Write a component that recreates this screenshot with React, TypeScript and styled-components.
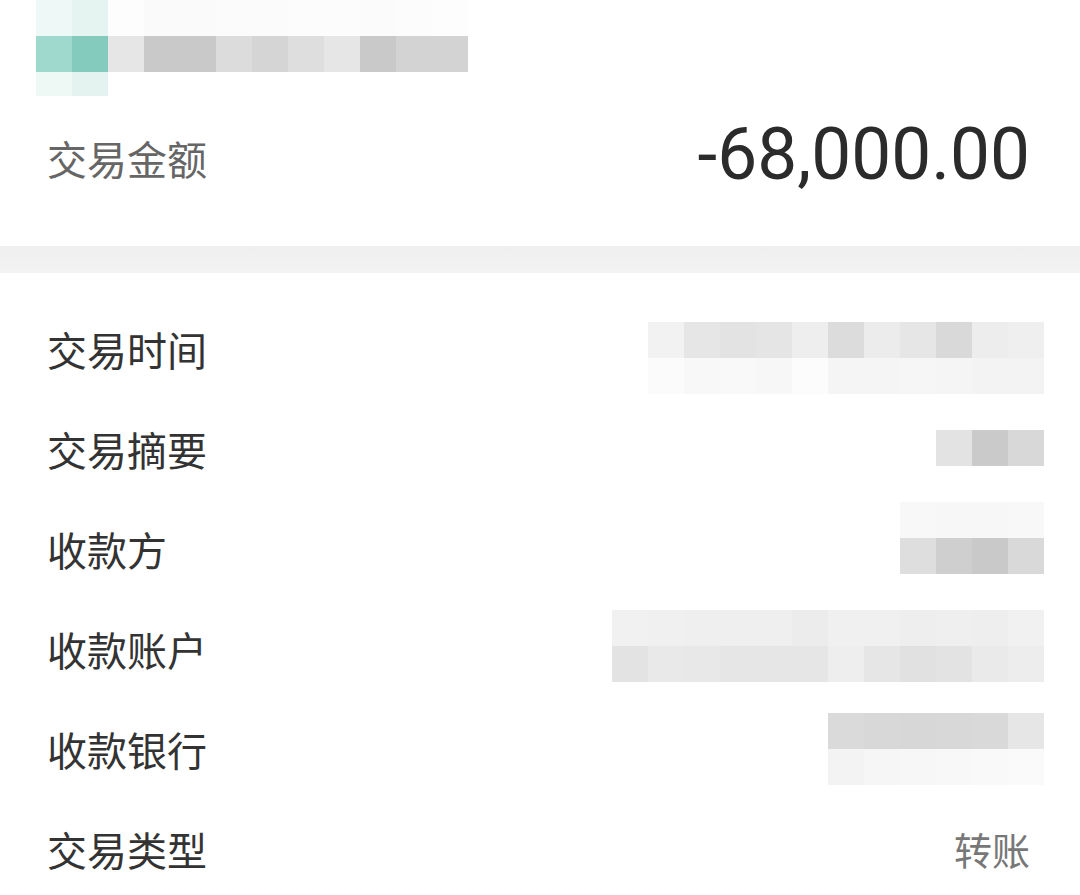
import styled, { createGlobalStyle } from "styled-components";

const GlobalStyle = createGlobalStyle`
  html, body {
    margin: 0;
    padding: 0;
    background: #ffffff;
    font-family: "Noto Sans CJK SC", "Noto Sans", sans-serif;
  }
`;

const Page = styled.div`
  width: 1080px;
  height: 895px;
  overflow: hidden;
  background: #ffffff;
`;

const Header = styled.header`
  padding: 0 0 0 36px;
  height: 96px;
  overflow: hidden;
`;

const Grid = styled.div<{ $cols: number }>`
  display: grid;
  grid-template-columns: repeat(${(p) => p.$cols}, 36px);
  grid-auto-rows: 36px;
  filter: blur(0.6px);
`;

const Cell = styled.span<{ $c: string }>`
  background: ${(p) => p.$c};
`;

const AmountRow = styled.div`
  display: flex;
  align-items: center;
  justify-content: space-between;
  height: 120px;
  padding: 0 50px 0 47px;
`;

const AmountLabel = styled.span`
  font-size: 40px;
  color: #666666;
  line-height: 1;
  margin-top: 4px;
`;

const Amount = styled.span`
  display: inline-block;
  font-family: Roboto, "Liberation Sans", sans-serif;
  font-size: 73px;
  line-height: 1;
  color: #2b2b2b;
  margin-top: -4px;
  transform: scaleX(0.975);
  transform-origin: right center;
`;

const Band = styled.div`
  height: 27px;
  margin-top: 30px;
  background: linear-gradient(#efefef, #f3f3f3);
`;

const List = styled.ul`
  list-style: none;
  margin: 0;
  padding: 26px 0 0;
`;

const Row = styled.li`
  display: flex;
  align-items: center;
  justify-content: space-between;
  height: 100px;
  padding: 0 36px 0 47px;
`;

const Label = styled.span`
  font-size: 40px;
  line-height: 1;
  color: #333333;
`;

const Value = styled.span`
  font-size: 38px;
  line-height: 1;
  color: #777777;
  margin-right: 14px;
`;

const Blur = styled.div<{ $shift: number }>`
  margin-top: ${(p) => p.$shift}px;
`;

function Mosaic({ rows }: { rows: string[][] }) {
  return (
    <Grid $cols={rows[0].length}>
      {rows.flat().map((c, i) => (
        <Cell key={i} $c={c} />
      ))}
    </Grid>
  );
}

const W = "#ffffff";

const headerMosaic = [
  ["#eef8f6", "#e6f4f1", "#fdfdfd", "#fafafa", "#fafafa", "#fbfbfb", "#fbfbfb", "#fcfcfc", "#fcfcfc", "#fbfbfb", "#fcfcfc", "#fdfdfd"],
  ["#9fd9cd", "#85cbbd", "#e6e6e6", "#c9c9c9", "#c9c9c9", "#dcdcdc", "#d5d5d5", "#dedede", "#e6e6e6", "#c9c9c9", "#d3d3d3", "#d3d3d3"],
  ["#eef8f5", "#e4f3ef", W, W, W, W, W, W, W, W, W, W],
];

const rows: { label: string; value?: string; shift?: number; mosaic?: string[][] }[] = [
  {
    label: "交易时间",
    shift: 18,
    mosaic: [
      ["#f2f2f2", "#e6e6e6", "#e3e3e3", "#e5e5e5", "#eeeeee", "#dcdcdc", "#ececec", "#e6e6e6", "#d9d9d9", "#ededed", "#efefef"],
      ["#fbfbfb", "#f8f8f8", "#f9f9f9", "#f7f7f7", "#fcfcfc", "#f5f5f5", "#f5f5f5", "#f6f6f6", "#f5f5f5", "#f3f3f3", "#f3f3f3"],
    ],
  },
  {
    label: "交易摘要",
    shift: -2,
    mosaic: [["#e3e3e3", "#cacaca", "#d8d8d8"]],
  },
  {
    label: "收款方",
    shift: -22,
    mosaic: [
      ["#f8f8f8", "#f7f7f7", "#f7f7f7", "#f8f8f8"],
      ["#dedede", "#cfcfcf", "#c9c9c9", "#d9d9d9"],
    ],
  },
  {
    label: "收款账户",
    shift: -6,
    mosaic: [
      ["#f1f1f1", "#f0f0f0", "#efefef", "#efefef", "#efefef", "#ececec", "#f0f0f0", "#f0f0f0", "#eeeeee", "#efefef", "#eeeeee", "#f1f1f1"],
      ["#e3e3e3", "#e9e9e9", "#e8e8e8", "#e6e6e6", "#e6e6e6", "#e6e6e6", "#eeeeee", "#e6e6e6", "#e1e1e1", "#e3e3e3", "#eaeaea", "#ededed"],
    ],
  },
  {
    label: "收款银行",
    shift: 0,
    mosaic: [
      ["#dadada", "#d8d8d8", "#d7d7d7", "#d8d8d8", "#d9d9d9", "#e6e6e6"],
      ["#f3f3f3", "#f6f6f6", "#f7f7f7", "#f8f8f8", "#f9f9f9", "#fafafa"],
    ],
  },
  { label: "交易类型", value: "转账" },
];

export default function App() {
  return (
    <Page>
      <GlobalStyle />
      <Header>
        <Mosaic rows={headerMosaic} />
      </Header>
      <AmountRow>
        <AmountLabel>交易金额</AmountLabel>
        <Amount>-68,000.00</Amount>
      </AmountRow>
      <Band />
      <List>
        {rows.map((r) => (
          <Row key={r.label}>
            <Label>{r.label}</Label>
            {r.mosaic ? (
              <Blur $shift={r.shift ?? 0}>
                <Mosaic rows={r.mosaic} />
              </Blur>
            ) : (
              <Value>{r.value}</Value>
            )}
          </Row>
        ))}
      </List>
    </Page>
  );
}
